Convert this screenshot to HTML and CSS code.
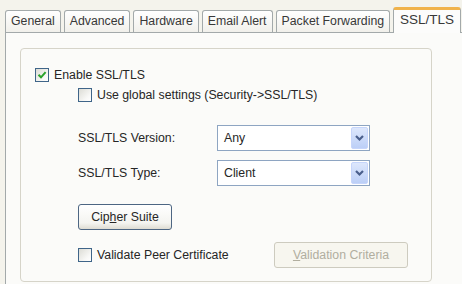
FILE: index.html
```html
<!DOCTYPE html>
<html lang="en">
<head>
    <meta charset="UTF-8">
    <meta name="viewport" content="width=device-width, initial-scale=1.0">
    <title>SSL/TLS Settings</title>
    <link rel="stylesheet" href="styles.css">
</head>
<body>
    <div class="tabview">
        <div class="tabstrip">
            <div class="tab">General</div>
            <div class="tab">Advanced</div>
            <div class="tab">Hardware</div>
            <div class="tab">Email Alert</div>
            <div class="tab">Packet Forwarding</div>
            <div class="tab selected">SSL/TLS</div>
        </div>

        <div class="panel">
            <div class="group">
                <label class="check-row">
                    <span class="checkbox">
                        <svg width="12" height="12" viewBox="0 0 12 12"><path d="M2.5 5.8 L5 8.3 L9.6 3.2" fill="none" stroke="#2aa22a" stroke-width="2"/></svg>
                    </span>
                    Enable SSL/TLS
                </label>

                <div class="indent">
                    <label class="check-row global">
                        <span class="checkbox"></span>
                        Use global settings (Security-&gt;SSL/TLS)
                    </label>

                    <div class="field-row version">
                        <span class="field-label">SSL/TLS Version:</span>
                        <div class="select">
                            <span>Any</span>
                            <span class="arrow">
                                <svg width="11" height="8" viewBox="0 0 11 8"><path d="M2 2 L5.5 5.5 L9 2" fill="none" stroke="#4a5f8c" stroke-width="2.2"/></svg>
                            </span>
                        </div>
                    </div>

                    <div class="field-row type">
                        <span class="field-label">SSL/TLS Type:</span>
                        <div class="select">
                            <span>Client</span>
                            <span class="arrow">
                                <svg width="11" height="8" viewBox="0 0 11 8"><path d="M2 2 L5.5 5.5 L9 2" fill="none" stroke="#4a5f8c" stroke-width="2.2"/></svg>
                            </span>
                        </div>
                    </div>

                    <button class="xp-btn cipher">Cip<u>h</u>er Suite</button>

                    <div class="validate-row">
                        <label class="check-row validate">
                            <span class="checkbox"></span>
                            Validate Peer Certificate
                        </label>
                        <button class="xp-btn disabled criteria" disabled><u>V</u>alidation Criteria</button>
                    </div>
                </div>
            </div>
        </div>
    </div>
</body>
</html>
```

FILE: styles.css
```css
* {
    margin: 0;
    padding: 0;
    box-sizing: border-box;
}

body {
    width: 462px;
    height: 284px;
    overflow: hidden;
    background: #f4f3ec;
    font-family: "Liberation Sans", Arial, sans-serif;
    font-size: 12.3px;
    color: #262626;
}

.tabview {
    margin-left: 5px;
    width: 470px;
}

.tabstrip {
    display: flex;
    align-items: flex-end;
    height: 32px;
}

.tab {
    height: 22px;
    padding: 0 5px;
    margin-right: 3px;
    border: 1px solid #a3a9aa;
    border-bottom: none;
    border-radius: 3px 3px 0 0;
    background: linear-gradient(#ffffff, #f1f0eb);
    line-height: 21px;
    color: #383838;
    white-space: nowrap;
}

.tab.selected {
    position: relative;
    z-index: 1;
    height: 26px;
    margin-bottom: -1px;
    padding: 0 6px;
    border-top: 3px solid #f0b24a;
    background: #fcfcfb;
    line-height: 20px;
    font-size: 13.5px;
}

.panel {
    height: 262px;
    padding: 15px 0 0 14px;
    border: 1px solid #a3a9aa;
    background: #fbfbf9;
}

.group {
    width: 412px;
    height: 234px;
    padding: 18px 0 0 14px;
    border: 1px solid #d6d4c9;
    border-radius: 4px;
}

.check-row {
    display: flex;
    align-items: center;
    gap: 5px;
    height: 15px;
    white-space: nowrap;
}

.checkbox {
    display: flex;
    align-items: center;
    justify-content: center;
    width: 14px;
    height: 14px;
    border: 1px solid #3f6589;
    background: linear-gradient(135deg, #dcdcd5, #f8f8f6 70%, #ffffff);
}

.indent {
    margin-left: 43px;
}

.global {
    margin-top: 5px;
}

.field-row {
    display: flex;
    align-items: center;
    height: 26px;
}

.version {
    margin-top: 23px;
}

.type {
    margin-top: 9px;
}

.field-label {
    width: 139px;
}

.select {
    display: flex;
    align-items: center;
    justify-content: space-between;
    width: 153px;
    height: 26px;
    padding: 0 1px 0 6px;
    border: 1px solid #8ea5c2;
    background: #fff;
}

.arrow {
    display: flex;
    align-items: center;
    justify-content: center;
    width: 17px;
    height: 22px;
    border: 1px solid #c6d5fb;
    border-radius: 2px;
    background: linear-gradient(#dde7fc, #bccff7);
}

.xp-btn {
    display: block;
    height: 26px;
    border: 1px solid #4d6683;
    border-radius: 3px;
    background: linear-gradient(#ffffff, #f4f4f0 75%, #dedcd2);
    font: inherit;
    color: inherit;
}

.cipher {
    width: 94px;
    margin-top: 18px;
}

.validate-row {
    display: flex;
    align-items: center;
    height: 26px;
    margin-top: 12px;
}

.validate {
    width: 196px;
}

.xp-btn.disabled {
    width: 134px;
    border-color: #cdcbbf;
    background: #f7f6ef;
    color: #b1ae9f;
}
```
